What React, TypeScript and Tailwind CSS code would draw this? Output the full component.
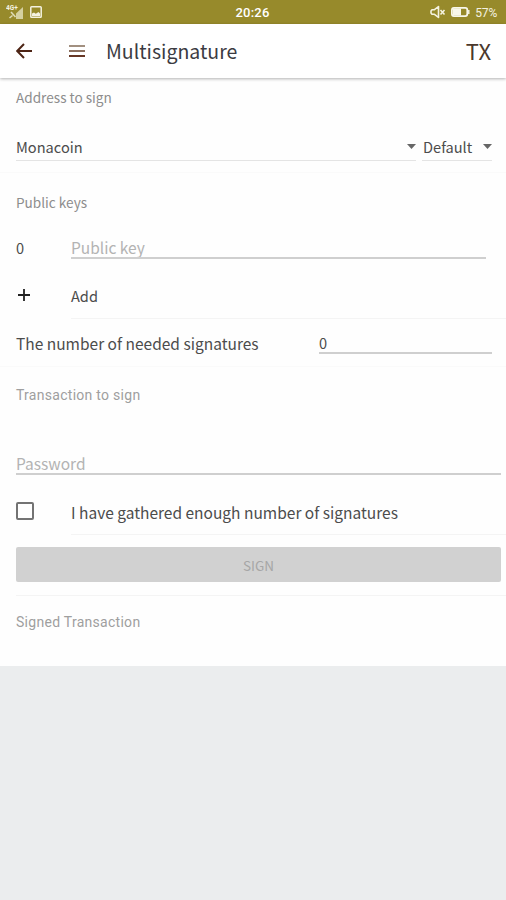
import React, { useState } from 'react';

const SignalIcon = () => (
  <svg width="18" height="16" viewBox="0 0 18 16" aria-hidden="true">
    <path d="M10 9.500 17 3v12h-7z" fill="#d5d0a0" />
    <path d="M5 8l4.500 5" stroke="#dedab6" strokeWidth="1.600" />
    <path d="M3.500 14l3-2.500" stroke="#dedab6" strokeWidth="1.600" />
    <text x="0" y="6" fontSize="6.500" fontWeight="700" fill="#f5f3e2" fontFamily="Roboto, sans-serif">
      4G+
    </text>
  </svg>
);

const PictureIcon = () => (
  <svg width="12" height="12" viewBox="0 0 12 12" aria-hidden="true">
    <rect x="0.800" y="0.800" width="10.400" height="10.400" rx="0.800" fill="none" stroke="#f4f2e0" strokeWidth="1.500" />
    <path d="M2 10V7.500l2-1 1.800 1.300L8.500 6 10 7.500V10z" fill="#f4f2e0" />
  </svg>
);

const MuteIcon = () => (
  <svg width="16" height="14" viewBox="0 0 16 14" fill="none" stroke="#f4f2e0" strokeWidth="1.600" aria-hidden="true">
    <path d="M2 4.700h2.500L8.500 1.500v11L4.500 9.300H2L1 8V6z" strokeLinejoin="round" />
    <path d="M10.500 5l4 4.500M14.500 5l-4 4.500" />
  </svg>
);

const BatteryIcon = () => (
  <svg width="19" height="10" viewBox="0 0 19 10" aria-hidden="true">
    <rect x="0.900" y="0.900" width="15.400" height="8.200" rx="2" fill="none" stroke="#f8f7ea" strokeWidth="1.800" />
    <rect x="2" y="1.500" width="8" height="7" fill="#f8f7ea" />
    <path d="M17.800 3v4" stroke="#f8f7ea" strokeWidth="1.400" />
  </svg>
);

const BackIcon = () => (
  <svg width="16" height="16" viewBox="0 0 16 16" fill="none" stroke="#4d2415" strokeWidth="2" aria-hidden="true">
    <path d="M16 8H1.500M8 1 1.200 8 8 15" />
  </svg>
);

const MenuIcon = () => (
  <svg width="16" height="12" viewBox="0 0 16 12" aria-hidden="true">
    <path d="M0 1h16" stroke="#a29080" strokeWidth="2" />
    <path d="M0 6h16" stroke="#8b6f5e" strokeWidth="2" />
    <path d="M0 11h16" stroke="#673725" strokeWidth="2" />
  </svg>
);

const CaretIcon = () => (
  <svg width="9" height="5" viewBox="0 0 9 5" aria-hidden="true">
    <path d="M0 0h9L4.500 5z" fill="#666" />
  </svg>
);

const App = () => {
  const [gathered, setGathered] = useState(false);

  return (
    <div className="flex min-h-[900px] w-full flex-col overflow-hidden bg-[#ebedee] font-['Noto_Sans_CJK_JP','Noto_Sans',sans-serif] text-[14.6px] leading-6 text-[#4c4c4c]">
      <div className="grid h-6 shrink-0 grid-cols-3 items-center bg-[#978a2b] pr-[9px] pl-1.5 font-[Roboto,sans-serif] text-white">
        <div className="flex items-center gap-1.5">
          <SignalIcon />
          <PictureIcon />
        </div>
        <span className="pt-px pl-0.5 text-center text-[13px] leading-4 font-medium tracking-[0.2px]">20:26</span>
        <div className="flex items-center justify-end gap-[5px]">
          <MuteIcon />
          <BatteryIcon />
          <span className="pt-px text-[12px] leading-4 tracking-[-0.2px] text-[#f4f2e0]">57%</span>
        </div>
      </div>

      <header className="z-10 flex h-[54px] shrink-0 items-center bg-white pr-[15px] pl-4 shadow-[0_1px_3px_rgba(0,0,0,0.3)]">
        <button aria-label="Back">
          <BackIcon />
        </button>
        <button aria-label="Menu" className="ml-[37px]">
          <MenuIcon />
        </button>
        <h1 className="ml-[21px] text-[19.5px] leading-7 text-[#3b3b42]">Multisignature</h1>
        <button className="mb-[3px] ml-auto text-[22px] leading-7 text-[#4b382c]">TX</button>
      </header>

      <main className="h-[588px] shrink-0 bg-[#fefefe]">
        <h2 className="flex h-10 items-center pb-0.5 pl-4 text-[13.6px] text-[#8d8d8d]">Address to sign</h2>
        <div className="flex h-[55px] gap-1.5 border-b border-[#fafafa] pr-[14px] pl-4">
          <div className="mt-[15px] flex h-7 flex-1 items-center justify-between border-b border-[#e4e4e4]">
            <span>Monacoin</span>
            <CaretIcon />
          </div>
          <div className="mt-[15px] flex h-7 w-[70px] items-center justify-between border-b border-[#e4e4e4]">
            <span className="pl-px">Default</span>
            <CaretIcon />
          </div>
        </div>

        <h2 className="flex h-[51px] items-center pt-1.5 pl-4 text-[13.6px] text-[#8d8d8d]">Public keys</h2>
        <div className="flex h-[46px] items-center pr-5 pl-4">
          <span className="w-[55px] pt-0.5">0</span>
          <input
            placeholder="Public key"
            className="h-6 flex-1 border-b-2 border-[#cfcfcf] bg-transparent pt-px text-[15.5px] outline-none placeholder:text-[#b3b3b3]"
          />
        </div>
        <div className="flex h-[49px] items-center pl-4">
          <svg width="16" height="16" viewBox="0 0 16 16" aria-hidden="true">
            <path d="M2 8h12M8 2v12" stroke="#222" strokeWidth="1.800" />
          </svg>
          <span className="ml-[39px] flex h-full flex-1 items-center border-b border-[#f4f4f4] pt-[3px]">Add</span>
        </div>
        <div className="flex h-12 items-center border-b border-[#fafafa] pr-[14px] pl-4">
          <span className="w-[303px] text-[15.5px]">The number of needed signatures</span>
          <span className="h-[22px] flex-1 border-b-2 border-[#cfcfcf] leading-[22px]">0</span>
        </div>

        <h2 className="flex h-[55px] items-center pl-4 font-[Roboto,sans-serif] text-[14px] tracking-[0.28px] text-[#9f9f9f]">
          Transaction to sign
        </h2>
        <div className="h-[53px] pt-[29px] pr-[5px] pl-4">
          <input
            type="password"
            placeholder="Password"
            className="block h-6 w-full border-b-2 border-[#cfcfcf] bg-transparent pt-px text-[15.5px] outline-none placeholder:text-[#b3b3b3]"
          />
        </div>
        <label className="mt-[12px] flex h-12 items-center pl-4">
          <input
            type="checkbox"
            checked={gathered}
            onChange={() => setGathered(!gathered)}
            className="size-[18px] appearance-none rounded-[2px] border-2 border-[#737373]"
          />
          <span className="ml-[37px] flex h-full flex-1 items-center border-b border-[#f4f4f4] pt-0.5 text-[15.5px]">
            I have gathered enough number of signatures
          </span>
        </label>
        <div className="h-[61px] pt-3 pl-4">
          <button
            disabled={!gathered}
            className="block h-[35px] w-[485px] rounded-[2px] bg-[#d1d1d1] text-[13.5px] text-[#a6a6a6]"
          >
            SIGN
          </button>
          <div className="mt-[13px] border-b border-[#f4f4f4]" />
        </div>
        <h2 className="flex h-[51px] items-center pl-4 font-[Roboto,sans-serif] text-[14px] tracking-[0.28px] text-[#9f9f9f]">
          Signed Transaction
        </h2>
      </main>
    </div>
  );
};

export default App;
